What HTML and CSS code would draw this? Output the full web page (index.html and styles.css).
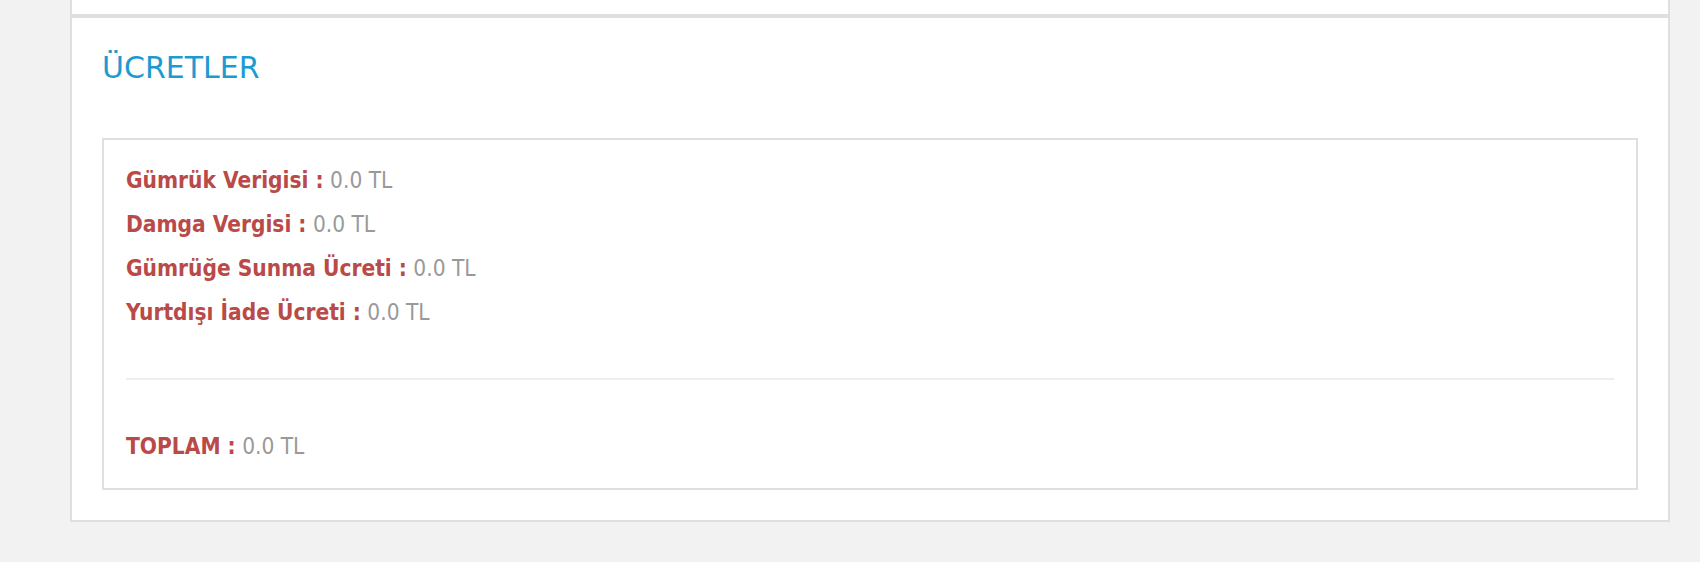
FILE: index.html
```html
<!DOCTYPE html>
<html>
 <head>
  <meta charset="utf-8">
  <title>Ücretler</title>
  <link rel="stylesheet" href="styles.css">
 </head>
 <body>
  <div class="panel panel-prev"></div>
  <div class="panel">
   <h3 class="panel-title">ÜCRETLER</h3>
   <div class="fees">
    <p class="fee"><span class="label">Gümrük Verigisi :</span> <span class="value">0.0 TL</span></p>
    <p class="fee"><span class="label">Damga Vergisi :</span> <span class="value">0.0 TL</span></p>
    <p class="fee"><span class="label">Gümrüğe Sunma Ücreti :</span> <span class="value">0.0 TL</span></p>
    <p class="fee"><span class="label">Yurtdışı İade Ücreti :</span> <span class="value">0.0 TL</span></p>
    <hr class="divider">
    <p class="fee total"><span class="label">TOPLAM :</span> <span class="value">0.0 TL</span></p>
   </div>
  </div>
 </body>
</html>
```

FILE: styles.css
```css
body
{
 margin: 0;
 background-color: #f2f2f2;
 font-family: "DejaVu Sans Condensed", "DejaVu Sans", sans-serif;
}
.panel
{
 margin: 0 30px 0 70px;
 background-color: #fff;
 border: 2px solid #dfdfdf;
 padding: 0 30px 30px 30px;
}
.panel-prev
{
 border-top: none;
 height: 14px;
 padding: 0;
}
.panel-title
{
 margin: 0;
 padding: 31px 0 51px 0;
 font-family: "DejaVu Sans", sans-serif;
 font-size: 30px;
 line-height: 38px;
 font-weight: normal;
 color: #1b9bd1;
}
.fees
{
 border: 2px solid #dfdfdf;
 padding: 18px 22px 20px 22px;
}
.fee
{
 margin: 0;
 font-size: 22.5px;
 line-height: 44px;
}
.label
{
 font-weight: bold;
 color: #b94a48;
}
.value
{
 color: #999;
}
.divider
{
 border: none;
 border-top: 2px solid #eeeeee;
 margin: 44px 0 44px 0;
}
```
